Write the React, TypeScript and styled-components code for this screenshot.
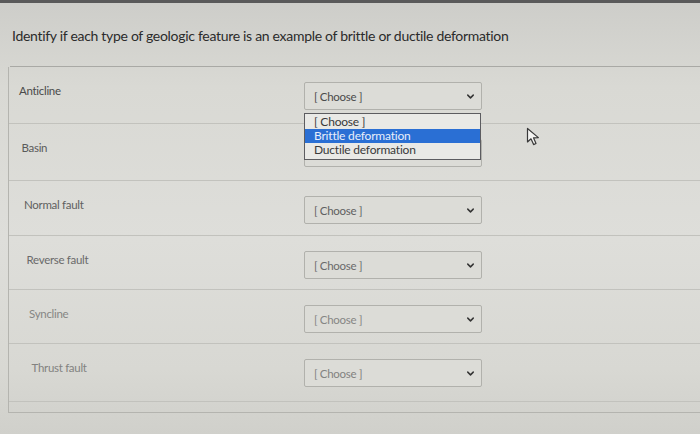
import React from "react";
import styled, { createGlobalStyle } from "styled-components";
import { ChevronDown } from "lucide-react";

const features = ["Anticline", "Basin", "Normal fault", "Reverse fault", "Syncline", "Thrust fault"];
const options = ["[ Choose ]", "Brittle deformation", "Ductile deformation"];
const tones = ["#4a4a4a", "#5a5a5a", "#606060", "#6a6a6a", "#868684", "#828280"];
const heights = [56, 56, 54, 53, 53, 57];

const App: React.FC = () => {
    return (
        <Page>
            <GlobalStyle />
            <TopStrip />
            <Header>
                <Title>Identify if each type of geologic feature is an example of brittle or ductile deformation</Title>
            </Header>
            <Table>
                {features.map((name, i) => (
                    <Row key={name} $height={heights[i]}>
                        <Label $tone={tones[i]} $shift={i * 2.5}>
                            {name}
                        </Label>
                        <SelectWrap>
                            <Select $tone={tones[i]}>
                                <SelectText $hidden={i === 1}>[ Choose ]</SelectText>
                                <ChevronDown size={11} strokeWidth={3.2} color="#333" />
                            </Select>
                            {i === 0 && (
                                <DropList>
                                    {options.map((opt, j) => (
                                        <Option key={opt} $active={j === 1}>
                                            {opt}
                                        </Option>
                                    ))}
                                </DropList>
                            )}
                        </SelectWrap>
                    </Row>
                ))}
                <Cursor width="16" height="20" viewBox="0 0 16 20">
                    <path d="M1.5 1.5 L1.5 15 L5 11.8 L7.6 17.6 L10 16.5 L7.5 10.8 L12.4 10.6 Z" fill="#f4f4f2" stroke="#3a3a3a" strokeWidth="1.2" strokeLinejoin="round" />
                </Cursor>
            </Table>
        </Page>
    );
};

export default App;

/* ~~~~~~ -- styling -- ~~~~~~ */

const GlobalStyle = createGlobalStyle`
    html, body {
        margin: 0;
        padding: 0;
        background: #d6d6d1;
    }
    body {
        font-family: Lato, "Open Sans", sans-serif;
    }
`;

const Page = styled.div`
    width: 700px;
    height: 434px;
    overflow: hidden;
    background: linear-gradient(180deg, #cdcdc9 0%, #d9d9d4 20%, #dededa 55%, #d8d8d3 85%, #d0d0cb 100%);
`;

const TopStrip = styled.div`
    height: 3px;
    background: #5a5a5a;
`;

const Header = styled.div`
    height: 62px;
    margin-left: 10px;
    padding-left: 2px;
    display: flex;
    align-items: center;
    padding-bottom: 1px;
    border-bottom: 1px solid #a9a9a5;
`;

const Title = styled.div`
    font-size: 14px;
    letter-spacing: -0.3px;
    color: #2b2b2b;
    margin-top: 3px;
`;

const Table = styled.div`
    position: relative;
    margin-left: 8px;
    border-left: 1px solid #b4b4af;
    border-bottom: 1px solid #b4b4af;
    padding-bottom: 10px;
`;

const Row = styled.div<{ $height: number }>`
    display: grid;
    grid-template-columns: 295px 178px;
    align-items: start;
    height: ${(p) => p.$height}px;
    border-bottom: 1px solid #c2c2bd;

    &:last-child {
        border-bottom: none;
    }
`;

const Label = styled.div<{ $tone: string; $shift: number }>`
    padding: 17px 0 0 ${(p) => 10 + p.$shift}px;
    font-size: 11.5px;
    letter-spacing: -0.3px;
    color: ${(p) => p.$tone};
`;

const SelectWrap = styled.div`
    position: relative;
    margin-top: 15px;
`;

const Select = styled.div<{ $tone: string }>`
    height: 28px;
    box-sizing: border-box;
    border: 1px solid #b1b1ac;
    border-radius: 2px;
    background: #dcdcd7;
    display: flex;
    align-items: center;
    justify-content: space-between;
    padding: 0 5px 0 9px;
    font-size: 11.5px;
    letter-spacing: -0.3px;
    color: ${(p) => p.$tone};
`;

const SelectText = styled.span<{ $hidden: boolean }>`
    visibility: ${(p) => (p.$hidden ? "hidden" : "visible")};
`;

const DropList = styled.div`
    position: absolute;
    top: 31px;
    left: 0;
    width: 177px;
    box-sizing: border-box;
    border: 1px solid #5c5c60;
    background: #e9e9e6;
    padding: 1px 0 2px;
    z-index: 2;
`;

const Option = styled.div<{ $active: boolean }>`
    height: 14px;
    line-height: 14px;
    padding-left: 9px;
    font-size: 12px;
    letter-spacing: -0.2px;
    color: ${(p) => (p.$active ? "#e8eefa" : "#3a3a3a")};
    background: ${(p) => (p.$active ? "#2a6fd4" : "transparent")};
`;

const Cursor = styled.svg`
    position: absolute;
    left: 517px;
    top: 60px;
`;
